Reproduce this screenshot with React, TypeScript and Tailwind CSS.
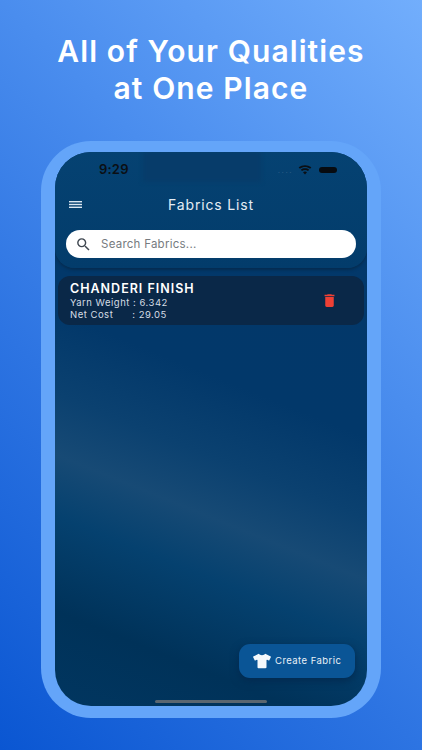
import { FaTshirt } from "react-icons/fa";
import { MdDelete, MdSearch } from "react-icons/md";

function MenuIcon() {
  return (
    <svg viewBox="0 0 13 7" className="h-[7px] w-[13px]" fill="#dbe7f1">
      <rect y="0" width="13" height="1.4" />
      <rect y="2.8" width="13" height="1.4" />
      <rect y="5.6" width="13" height="1.4" />
    </svg>
  );
}

function Wifi() {
  return (
    <svg viewBox="0 0 16 12" className="h-[10px] w-[14px]" fill="#0b0f14">
      <path d="M8 11.5 L5.6 8.6 C7 7.5 9 7.5 10.4 8.6 Z" />
      <path d="M4.4 7.2 L3 5.6 C5.9 3.3 10.1 3.3 13 5.6 L11.6 7.2 C9.5 5.6 6.5 5.6 4.4 7.2 Z" />
      <path d="M1.9 4.4 L0.4 2.8 C4.8 -0.7 11.2 -0.7 15.6 2.8 L14.1 4.4 C10.6 1.7 5.4 1.7 1.9 4.4 Z" />
    </svg>
  );
}

export default function App() {
  return (
    <div
      className="flex h-[750px] w-[422px] flex-col items-center overflow-hidden bg-[linear-gradient(225deg,#72aefc_0%,#4a8dee_36%,#2d74e2_64%,#0a56d2_100%)] pt-[33px]"
      style={{ fontFamily: "Inter, 'Liberation Sans', sans-serif" }}
    >
      <h1 className="text-center text-[30px] leading-[37px] font-semibold tracking-[1.1px] text-white">
        All of Your Qualities
        <br />
        at One Place
      </h1>

      <div className="mt-[34px] rounded-[50px] bg-[#64a5f9] px-[14px] pt-[11px] pb-[12px]">
        <div className="relative flex h-[554px] w-[312px] flex-col overflow-hidden rounded-[36px] bg-[linear-gradient(202deg,#03386a_0%,#02386a_42%,#0b4170_54%,#174a75_63%,#05416f_72%,#003259_86%,#013660_100%)]">
          <div className="rounded-b-[20px] bg-[linear-gradient(180deg,#054272_0%,#033c6b_100%)] pb-[10px] shadow-[0_2px_3px_#052c50]">
            <div className="relative flex h-[34px] items-center justify-between pt-[2px] pr-[30px] pl-[44px]">
              <div className="absolute top-0 left-[88px] h-[30px] w-[118px] bg-[#073c6a] blur-[2px]" />
              <span className="relative text-[13px] font-semibold tracking-[0.2px] text-[#0b0f14]">9:29</span>
              <div className="relative flex items-center">
                <span className="mr-[5px] text-[8px] tracking-[1.5px] text-[#2f5f88]">....</span>
                <Wifi />
                <div className="ml-[7px] h-[6px] w-[18px] rounded-full bg-[#070b10]" />
              </div>
            </div>
            <div className="relative mt-[8px] flex h-[20px] items-center justify-center">
              <div className="absolute left-[14px] flex">
                <MenuIcon />
              </div>
              <span className="text-[14px] tracking-[0.85px] text-[#e4edf5]">Fabrics List</span>
            </div>
            <div className="mx-[11px] mt-[16px] flex h-[28px] items-center rounded-full bg-white pl-[9px]">
              <MdSearch className="text-[#3f4750]" size={17} />
              <span className="mt-[1px] ml-[9px] text-[11.5px] tracking-[0.25px] text-[#767b80]">Search Fabrics...</span>
            </div>
          </div>

          <div className="mx-[3px] mt-[8px] flex h-[49px] items-center justify-between rounded-[12px] bg-[#0a2848] pr-[26px] pl-[12px]">
            <div className="flex flex-col">
              <span className="text-[12.5px] leading-[16px] font-semibold tracking-[1px] text-white">CHANDERI FINISH</span>
              <span className="text-[9.5px] leading-[12px] tracking-[0.5px] text-[#d5dde5]">Yarn Weight : 6.342</span>
              <span className="text-[9.5px] leading-[12px] tracking-[0.5px] whitespace-pre text-[#d5dde5]">Net Cost      : 29.05</span>
            </div>
            <MdDelete className="text-[#ee4035]" size={17} />
          </div>

          <div className="mt-auto mr-[12px] mb-[28px] flex h-[34px] w-[116px] items-center gap-[4px] self-end rounded-[11px] bg-[#0a5596] pl-[14px] shadow-[0_3px_8px_#03294f]">
            <FaTshirt className="text-[#f4f8fc]" size={18} />
            <span className="text-[9.5px] tracking-[0.45px] text-[#e8f0f7]">Create Fabric</span>
          </div>
          <div className="absolute bottom-[3px] left-[100px] h-[3px] w-[112px] rounded-full bg-[#5a6670]" />
        </div>
      </div>
    </div>
  );
}
